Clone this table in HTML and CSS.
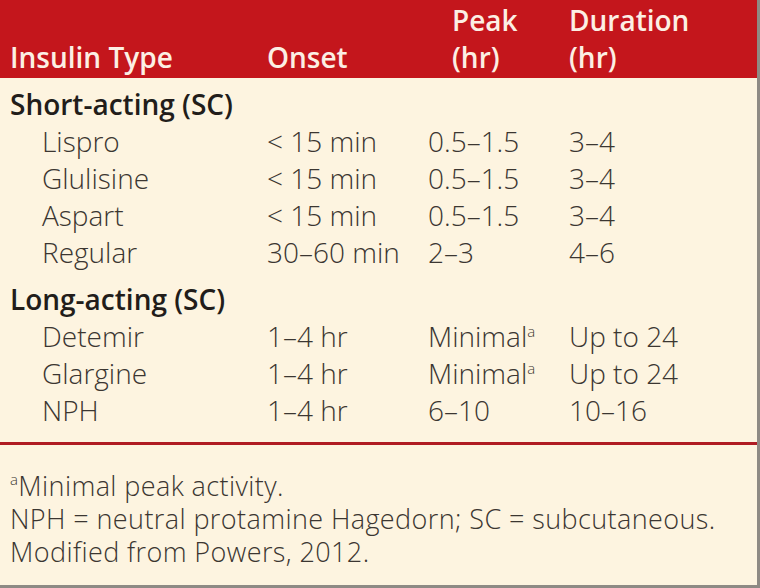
FILE: index.html
```html
<!DOCTYPE html>
<html>
<head>
<meta charset="utf-8">
<link rel="stylesheet" href="styles.css">
</head>
<body>
<div class="card">
  <table class="ins">
    <thead>
      <tr>
        <th class="c1">Insulin Type</th>
        <th class="c2">Onset</th>
        <th class="c3">Peak<br>(hr)</th>
        <th class="c4">Duration<br>(hr)</th>
      </tr>
    </thead>
    <tbody>
      <tr class="sec"><td colspan="4">Short-acting (SC)</td></tr>
      <tr><td class="c1 sub">Lispro</td><td>&lt; 15 min</td><td>0.5–1.5</td><td>3–4</td></tr>
      <tr><td class="c1 sub">Glulisine</td><td>&lt; 15 min</td><td>0.5–1.5</td><td>3–4</td></tr>
      <tr><td class="c1 sub">Aspart</td><td>&lt; 15 min</td><td>0.5–1.5</td><td>3–4</td></tr>
      <tr><td class="c1 sub">Regular</td><td>30–60 min</td><td>2–3</td><td>4–6</td></tr>
      <tr class="sec sec2"><td colspan="4">Long-acting (SC)</td></tr>
      <tr><td class="c1 sub">Detemir</td><td>1–4 hr</td><td>Minimal<sup>a</sup></td><td>Up to 24</td></tr>
      <tr><td class="c1 sub">Glargine</td><td>1–4 hr</td><td>Minimal<sup>a</sup></td><td>Up to 24</td></tr>
      <tr class="last"><td class="c1 sub">NPH</td><td>1–4 hr</td><td>6–10</td><td>10–16</td></tr>
    </tbody>
  </table>
  <div class="notes">
    <p><sup>a</sup>Minimal peak activity.</p>
    <p>NPH = neutral protamine Hagedorn; SC = subcutaneous.</p>
    <p>Modified from Powers, 2012.</p>
  </div>
</div>
</body>
</html>
```

FILE: styles.css
```css
html, body {
  margin: 0;
  padding: 0;
  background: #fdf4e0;
}
body {
  width: 760px;
  height: 588px;
  overflow: hidden;
  font-family: "Open Sans", "Noto Sans", sans-serif;
  font-stretch: 100%;
  font-weight: 400;
  color: #3b3631;
}
.card {
  width: 757px;
  height: 585px;
  border-right: 3px solid #8e8a84;
  border-bottom: 3px solid #8e8a84;
  background: #fdf4e0;
}
.ins {
  width: 100%;
  border-collapse: collapse;
  border-bottom: 3px solid #b01c22;
}
.ins thead tr {
  background: #c4161c;
}
.ins th {
  color: #fcefe4;
  font-weight: 600;
  font-size: 28px;
  line-height: 37px;
  text-align: left;
  vertical-align: bottom;
  padding: 2px 0 2px 0;
}
.ins th.c1 { padding-left: 10px; width: 257px; }
.ins th.c2 { width: 161px; }
.ins th.c3 { width: 141px; padding-left: 24px; box-sizing: border-box; }
.ins td {
  font-size: 28px;
  line-height: 37px;
  font-weight: 350;
  padding: 0;
  white-space: nowrap;
}
.ins td.c1 { padding-left: 10px; }
.ins td.sub { padding-left: 42px; font-stretch: 94%; }
.ins tr.sec td {
  font-weight: 600;
  color: #221d1a;
  padding-left: 10px;
  padding-top: 8px;
}
.ins tr.sec2 td { padding-top: 10px; }
.ins tr.last td { padding-bottom: 13px; }
.ins sup {
  font-size: 15px;
  line-height: 0;
  vertical-align: 10px;
}
.notes {
  padding: 24px 10px 0 10px;
}
.notes p {
  margin: 0;
  font-size: 27px;
  font-weight: 350;
  line-height: 33px;
  letter-spacing: 0.4px;
}
.notes sup {
  font-size: 15px;
  line-height: 0;
  vertical-align: 11px;
}
```
